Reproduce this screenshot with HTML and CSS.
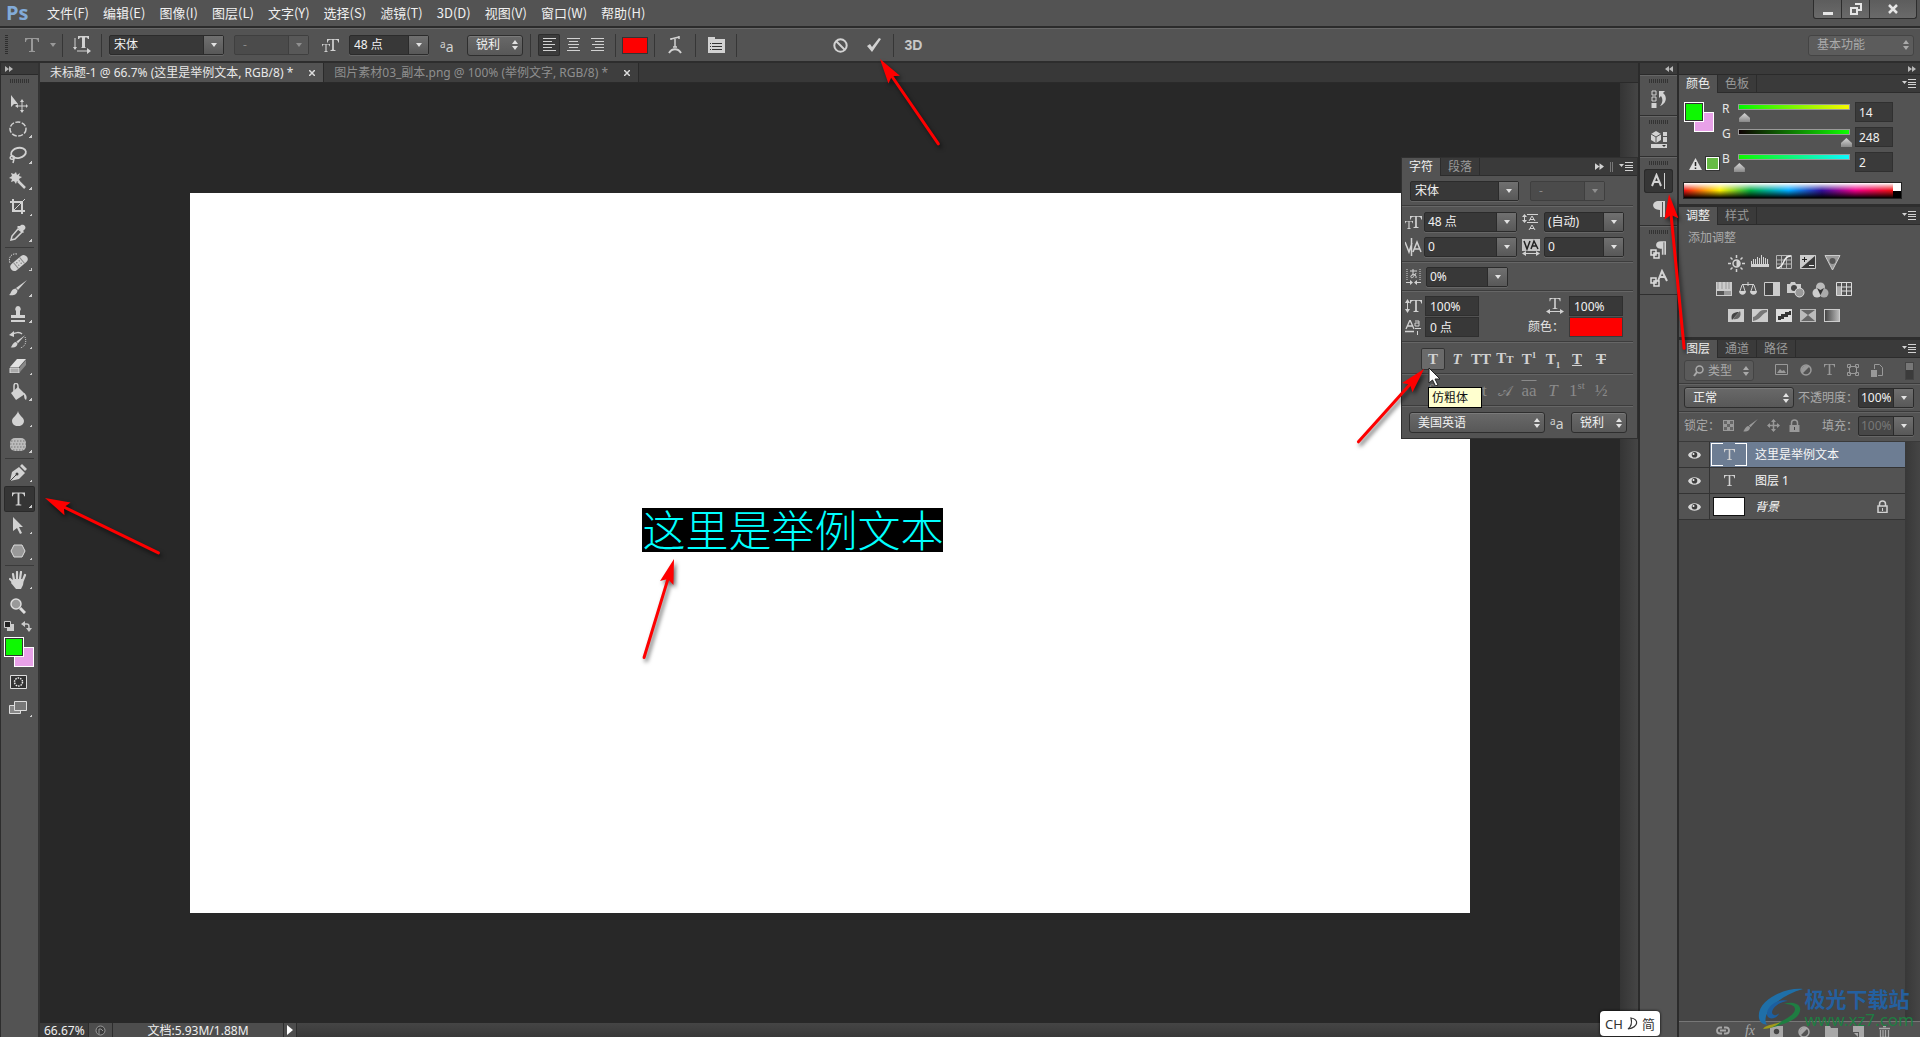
FILE: index.html
```html
<!DOCTYPE html>
<html lang="zh-CN">
<head>
<meta charset="utf-8">
<title>未标题-1 @ 66.7%</title>
<link rel="stylesheet" href="styles.css">
</head>
<body>
<svg class="defs" aria-hidden="true">
  <symbol id="caret" viewBox="0 0 6 4"><path d="M0 0h6L3 4z" fill="currentColor"/></symbol>
  <symbol id="updown" viewBox="0 0 6 10"><path d="M0 4h6L3 0zM0 6h6L3 10z" fill="currentColor"/></symbol>
  <symbol id="flyout" viewBox="0 0 14 9"><path d="M0 2h5L2.500 5z" fill="currentColor"/><path d="M6 .5h8M6 3.500h8M6 5.500h8M6 8.500h8" stroke="currentColor"/></symbol>
  <symbol id="ff" viewBox="0 0 8 6"><path d="M0 0l4 3-4 3zM4 0l4 3-4 3z" fill="currentColor"/></symbol>
  <symbol id="rw" viewBox="0 0 8 6"><path d="M4 0L0 3l4 3zM8 0L4 3l4 3z" fill="currentColor"/></symbol>
  <symbol id="eye" viewBox="0 0 13 10"><path d="M0 5C2 0 11 0 13 5C11 10 2 10 0 5z" fill="#d8d8d8"/><circle cx="6.500" cy="4.800" r="2.800" fill="#3c3c3c"/><circle cx="5.500" cy="4" r="1" fill="#eee"/></symbol>
  <symbol id="big-t" viewBox="0 0 14 14"><path d="M0 0h14v4h-1c0-2-1-3-3-3H8v11c0 1 1 1 2 1v1H4v-1c1 0 2 0 2-1V1H4C2 1 1 2 1 4H0z" fill="currentColor"/></symbol>
  <symbol id="lock" viewBox="0 0 11 13"><path d="M2.500 6V4a3 3 0 0 1 6 0v2" fill="none" stroke="currentColor" stroke-width="1.500"/><path d="M.5 6h10v7H.5z" fill="currentColor"/><path d="M5 8h1v3H5z" fill="#444"/></symbol>
  <symbol id="lock-open" viewBox="0 0 11 13"><path d="M2.500 6V4a3 3 0 0 1 6 0v2M1 6h9v6.500H1z" fill="none" stroke="currentColor" stroke-width="1.500"/><path d="M5 8h1v3H5z" fill="currentColor"/></symbol>
  <symbol id="brush" viewBox="0 0 18 16"><path d="M18 0L9 10 7 8zM6.500 8.500l2 2C8 15 4 16 0 15c2-1 2-6 6.500-6.500z" fill="currentColor"/></symbol>
  <symbol id="pilcrow" viewBox="0 0 12 16"><path d="M12 0v16h-2V1H9v15H7V9C-2 9-2 0 6 0z" fill="currentColor"/></symbol>
  <symbol id="half" viewBox="0 0 12 12"><circle cx="6" cy="6" r="5" fill="none" stroke="currentColor" stroke-width="1.500"/><path d="M9.500 2.500a5 5 0 0 0-7 7z" fill="currentColor"/></symbol>
  <symbol id="arrowhead" viewBox="0 -8 26 16" overflow="visible"><path d="M0 0L25-7 21 0 25 7z" fill="#fe0000"/></symbol>
</svg>

<header class="menubar">
  <strong class="logo">Ps</strong>
  <nav class="menus">
    <a href="#">文件(F)</a><a href="#">编辑(E)</a><a href="#">图像(I)</a><a href="#">图层(L)</a><a href="#">文字(Y)</a><a href="#">选择(S)</a><a href="#">滤镜(T)</a><a href="#">3D(D)</a><a href="#">视图(V)</a><a href="#">窗口(W)</a><a href="#">帮助(H)</a>
  </nav>
  <div class="winbuttons">
    <button class="win-min" aria-label="最小化"><svg width="10" height="14"><path d="M0 10h10v3H0z" fill="#e6e6e6"/></svg></button>
    <button class="win-restore" aria-label="还原"><svg width="12" height="12"><path d="M5 1h6v6H7M1 5h6v6H1z" fill="none" stroke="#e6e6e6" stroke-width="2"/></svg></button>
    <button class="win-close" aria-label="关闭"><svg width="11" height="10"><path d="M1 1l8 8M9 1L1 9" stroke="#e6e6e6" stroke-width="2.500"/></svg></button>
  </div>
</header>

<section class="options">
  <span class="vgrip"></span>
  <button class="flat preset" aria-label="文字工具"><svg class="dim" width="14" height="14"><use href="#big-t"/></svg><svg class="dim" width="6" height="4"><use href="#caret"/></svg></button>
  <i class="sep"></i>
  <button class="flat orient" aria-label="切换文本取向"><svg width="18" height="18" viewBox="0 0 18 18"><path d="M5 0h11v3h-1l-1-1.500h-2V11l1 1H8l1-1V1.500H7L6 3H5z" fill="currentColor"/><path d="M2 2v11M4 15h11" stroke="currentColor"/><path d="M0 11h4l-2 3zM14 12l4 3-4 3z" fill="currentColor"/></svg></button>
  <i class="sep"></i>
  <span class="combo w115"><select aria-label="字体"><option>宋体</option></select><i class="drop"><svg width="6" height="4"><use href="#caret"/></svg></i></span>
  <span class="combo w75 off"><select aria-label="字体样式" disabled><option>-</option></select><i class="drop"><svg width="6" height="4"><use href="#caret"/></svg></i></span>
  <svg class="size-icon" width="17" height="15" viewBox="0 0 17 15"><use href="#big-t" x="5" y="0" width="12" height="14"/><use href="#big-t" x="0" y="6" width="8" height="8"/></svg>
  <span class="combo w80"><select aria-label="字号"><option>48 点</option></select><i class="drop"><svg width="6" height="4"><use href="#caret"/></svg></i></span>
  <span class="aa"><small>a</small>a</span>
  <span class="pick w56"><select aria-label="消除锯齿"><option>锐利</option></select><svg width="6" height="10"><use href="#updown"/></svg></span>
  <i class="sep"></i>
  <div class="aligns">
    <button class="on" aria-label="左对齐"><svg width="13" height="15"><path d="M0 .5h13M0 3.500h9M0 6.500h12M0 9.500h9M0 12.500h13" stroke="currentColor"/></svg></button>
    <button aria-label="居中"><svg width="13" height="15"><path d="M0 .5h13M2 3.500h9M1 6.500h11M2 9.500h9M0 12.500h13" stroke="currentColor"/></svg></button>
    <button aria-label="右对齐"><svg width="13" height="15"><path d="M0 .5h13M4 3.500h9M1 6.500h12M4 9.500h9M0 12.500h13" stroke="currentColor"/></svg></button>
  </div>
  <i class="sep"></i>
  <button class="textcolor" aria-label="文本颜色"></button>
  <i class="sep"></i>
  <button class="flat cell" aria-label="变形"><svg width="14" height="18" viewBox="0 0 14 18"><path d="M3 3l8-2M7 2v9M5 11h4M3 2v2M11 0v3" stroke="currentColor" stroke-width="1.500" fill="none"/><path d="M1 17C4 12 10 12 13 17" stroke="currentColor" stroke-width="2" fill="none"/></svg></button>
  <i class="sep"></i>
  <button class="flat cell" aria-label="字符面板"><svg width="17" height="16" viewBox="0 0 17 16"><path d="M0 0h7v2h10v14H0z" fill="currentColor"/><path d="M2 6.500h1M4 6.500h10M2 9.500h1M4 9.500h10M2 12.500h1M4 12.500h10" stroke="#333"/></svg></button>
  <i class="sep"></i>
  <div class="commit">
    <button class="flat" aria-label="取消"><svg width="15" height="15"><circle cx="7.500" cy="7.500" r="6.200" fill="none" stroke="currentColor" stroke-width="2"/><path d="M3 3l9 9" stroke="currentColor" stroke-width="2"/></svg></button>
    <button class="flat" aria-label="提交"><svg width="16" height="14"><path d="M1 8l3-2 2 3 7-9 2 1-9 13z" fill="currentColor"/></svg></button>
    <i class="sep"></i>
    <button class="flat three-d">3D</button>
  </div>
  <span class="pick workspace-pick"><select aria-label="工作区"><option>基本功能</option></select><svg width="6" height="10"><use href="#updown"/></svg></span>
</section>

<main class="work">
  <aside class="tools">
    <div class="strip"><svg width="8" height="6"><use href="#ff"/></svg></div>
    <span class="grip"></span>
    <button aria-label="移动"><svg width="20" height="20" viewBox="0 0 20 20"><path d="M3 2l7 9H6l-3 3z" fill="currentColor"/><path d="M14 8v10M9 13h10" stroke="currentColor"/><path d="M12 9h4l-2-3zM12 17h4l-2 3zM10 11v4l-3-2zM18 11v4l2-2z" fill="currentColor"/></svg></button>
    <button class="more" aria-label="椭圆选框"><svg width="20" height="20" viewBox="0 0 20 20"><ellipse cx="10" cy="10" rx="8" ry="7" fill="none" stroke="currentColor" stroke-width="1.500" stroke-dasharray="5 1.500"/></svg></button>
    <button class="more" aria-label="套索"><svg width="20" height="20" viewBox="0 0 20 20"><ellipse cx="10.500" cy="8" rx="7.500" ry="5" transform="rotate(-12 10 8)" fill="none" stroke="currentColor" stroke-width="1.800"/><path d="M4 11c-3 1-2 4 1 3s1-3-1-3M6 14l-1 4" fill="none" stroke="currentColor" stroke-width="1.500"/></svg></button>
    <button class="more" aria-label="魔棒"><svg width="20" height="20" viewBox="0 0 20 20"><path d="M8 1l1 3 3-2-1 3 3 1-3 2 1 3-3-1-1 3-2-3-3 1 1-3-3-1 3-2-1-3 3 1z" fill="currentColor"/><path d="M10 10l7 7" stroke="currentColor" stroke-width="2.500"/></svg></button>
    <button class="more" aria-label="裁剪"><svg width="20" height="20" viewBox="0 0 20 20"><path d="M5 2v12h12M2 5h12v12" fill="none" stroke="currentColor" stroke-width="2"/><path d="M5 14L17 2" stroke="currentColor"/></svg></button>
    <button class="more" aria-label="吸管"><svg width="20" height="20" viewBox="0 0 20 20"><path d="M12 3c2-3 7 0 5 3l-2 2 1 1-1 1-6-6 1-1z" fill="currentColor"/><path d="M10 6L4 13l-1 4 4-1 7-7z" fill="none" stroke="currentColor" stroke-width="1.500"/></svg></button>
    <hr>
    <button class="more" aria-label="修复画笔"><svg width="20" height="20" viewBox="0 0 20 20"><g transform="rotate(-40 11 11)"><rect x="1" y="7" width="20" height="8" rx="4" fill="currentColor"/><path d="M7 7v8M15 7v8" stroke="#888"/><path d="M9 9h1v1H9zM12 9h1v1h-1zM9 12h1v1H9zM12 12h1v1h-1z" fill="#555"/></g><path d="M9 2C3 1 0 6 2 11" stroke="currentColor" stroke-dasharray="1.500 1" fill="none"/></svg></button>
    <button class="more" aria-label="画笔"><svg width="18" height="16"><use href="#brush"/></svg></button>
    <button class="more" aria-label="仿制图章"><svg width="16" height="16" viewBox="0 0 16 16"><path d="M8 0a3 3 0 0 1 2 5v4h5v3H1V9h5V5a3 3 0 0 1 2-5zM1 14h14v2H1z" fill="currentColor"/></svg></button>
    <button class="more" aria-label="历史记录画笔"><svg width="18" height="18" viewBox="0 0 18 18"><path d="M2 4c4-3 9-3 11-1" stroke="currentColor" stroke-width="1.500" fill="none"/><path d="M5 0v6L0 4z" fill="currentColor"/><use href="#brush" x="1" y="4" width="16" height="13"/><path d="M16 6c2 5 0 10-5 11" stroke="currentColor" stroke-dasharray="1 1" fill="none"/></svg></button>
    <button class="more" aria-label="橡皮擦"><svg width="18" height="14" viewBox="0 0 18 14"><path d="M8 0h9l-7 8H1z" fill="#e2e2e2"/><path d="M1 9h9v5H1z" fill="#aaa"/><path d="M17 1v5l-6 7V8z" fill="#888"/><path d="M1 9h9v5H1z" fill="none" stroke="#ddd"/></svg></button>
    <button class="more" aria-label="油漆桶"><svg width="18" height="18" viewBox="0 0 18 18"><path d="M5 9V3c0-4 4-3 4 0v5" stroke="currentColor" fill="none" stroke-width="1.500"/><path d="M9 4l7 7-9 6-5-7z" fill="currentColor"/><path d="M15 10c3 2 3 5 2 7-2-1-2-4-2-7z" fill="currentColor"/></svg></button>
    <button class="more" aria-label="模糊"><svg width="12" height="15" viewBox="0 0 12 15"><path d="M6 0c1 5 6 6 6 10 0 7-12 7-12 0 0-4 5-5 6-10z" fill="currentColor"/></svg></button>
    <button class="more" aria-label="海绵"><svg width="18" height="15" viewBox="0 0 18 15"><rect x="1" y="1" width="16" height="13" rx="5" fill="#bbb"/><path d="M2 4h14M1 7h16M2 10h14M4 13h10" stroke="#777" stroke-dasharray="1.500 1.500"/></svg></button>
    <hr>
    <button class="more" aria-label="钢笔"><svg width="18" height="18" viewBox="0 0 18 18"><path d="M1 17L3 8l7-5 6 6-6 6z" fill="currentColor"/><path d="M11 2l2-2 5 5-2 2z" fill="currentColor"/><path d="M1 17l6-6" stroke="#444"/><circle cx="8" cy="10" r="1.500" fill="#444"/></svg></button>
    <button class="more on" aria-label="文字"><svg width="13" height="14"><use href="#big-t"/></svg></button>
    <button class="more" aria-label="路径选择"><svg width="12" height="17" viewBox="0 0 12 17"><path d="M1 0l10 10H7l3 6-2 1-3-6-4 3z" fill="currentColor"/></svg></button>
    <button class="more" aria-label="多边形"><svg width="16" height="14" viewBox="0 0 16 14"><path d="M4 1h8l3 6-3 6H4L1 7z" fill="#999" stroke="#ddd"/></svg></button>
    <hr>
    <button class="more" aria-label="抓手"><svg width="18" height="18" viewBox="0 0 18 18"><path d="M5 9L4 3M8 8V1M11 8l1-7M14 9l2-5M5 12L1 8" stroke="currentColor" stroke-width="2.200" stroke-linecap="round"/><path d="M4 8h11l-1 6-2 4H7l-5-6z" fill="currentColor"/></svg></button>
    <button aria-label="缩放"><svg width="16" height="16" viewBox="0 0 16 16"><circle cx="6" cy="6" r="5" fill="#999" stroke="#ddd" stroke-width="1.500"/><path d="M10 10l5 5" stroke="#ddd" stroke-width="3"/></svg></button>
    <div class="swapline">
      <svg width="10" height="10"><path d="M3 3h7v7H3z" fill="#ccc"/><path d="M.5.5h6v6h-6z" fill="#222" stroke="#ccc"/></svg>
      <svg width="11" height="11"><path d="M3 3h3c2 0 2 1 2 5" fill="none" stroke="#ccc" stroke-width="1.500"/><path d="M0 3l4-3v6zM5 7h6l-3 4z" fill="#ccc"/></svg>
    </div>
    <div class="swatches"><button class="fg" aria-label="前景色"></button><button class="bg" aria-label="背景色"></button></div>
    <button aria-label="快速蒙版"><svg width="17" height="14"><path d="M.5.5h16v13H.5z" fill="#333" stroke="#ddd"/><circle cx="8.500" cy="7" r="4" fill="none" stroke="#eee" stroke-width="1.500" stroke-dasharray="1.500 1"/></svg></button>
    <button class="more" aria-label="屏幕模式"><svg width="18" height="14"><path d="M.5 4.500h11v8H.5z" fill="#888" stroke="#ddd"/><path d="M5.500.5h12v9h-12z" fill="#777" stroke="#ddd"/></svg></button>
  </aside>

  <section class="doc">
    <div class="tabs">
      <div class="tab active"><span>未标题-1 @ 66.7% (这里是举例文本, RGB/8) *</span><button aria-label="关闭"><svg width="6" height="6"><path d="M0 0l6 6M6 0L0 6" stroke="#ddd" stroke-width="1.500"/></svg></button></div>
      <div class="tab"><span>图片素材03_副本.png @ 100% (举例文字, RGB/8) *</span><button aria-label="关闭"><svg width="6" height="6"><path d="M0 0l6 6M6 0L0 6" stroke="#ddd" stroke-width="1.500"/></svg></button></div>
    </div>
    <div class="stage">
      <div class="pasteboard"><div class="canvas"><p class="sample">这里是举例文本</p></div></div>
      <div class="vscroll"></div>
    </div>
    <footer class="status">
      <span class="zoomlevel">66.67%</span>
      <span class="proof"><svg width="11" height="11"><circle cx="5.500" cy="5.500" r="4.500" fill="#3c3c3c" stroke="#999"/><path d="M4 9V4h2l2 2" stroke="#999" fill="none"/></svg></span>
      <span class="docsize">文档:5.93M/1.88M</span>
      <button aria-label="状态菜单"><svg width="6" height="10"><path d="M0 0l6 5-6 5z" fill="#fff"/></svg></button>
    </footer>

    <section class="charpanel">
      <div class="ptabs"><button class="active">字符</button><button>段落</button><span class="ends"><svg width="9" height="7"><use href="#ff"/></svg><i class="bars"></i><svg width="14" height="9"><use href="#flyout"/></svg></span></div>
      <div class="crow fonts">
        <span class="combo w109"><select aria-label="字体"><option>宋体</option></select><i class="drop"><svg width="6" height="4"><use href="#caret"/></svg></i></span>
        <span class="combo w75 off"><select aria-label="样式" disabled><option>-</option></select><i class="drop"><svg width="6" height="4"><use href="#caret"/></svg></i></span>
      </div>
      <div class="crow metrics">
        <svg width="17" height="15" viewBox="0 0 17 15"><use href="#big-t" x="5" y="0" width="12" height="14"/><use href="#big-t" x="0" y="6" width="8" height="8"/></svg>
        <span class="combo"><select aria-label="字号"><option>48 点</option></select><i class="drop"><svg width="6" height="4"><use href="#caret"/></svg></i></span>
        <svg width="17" height="16" viewBox="0 0 17 16"><path d="M2.500 1v7M5 .5h11M5 8.500h11" stroke="currentColor"/><path d="M0 3h5L2.500 0zM0 6h5L2.500 9z" fill="currentColor"/><path d="M7 7l3-5 3 5M7 16l3-5 3 5M8 5.500h4M8 14.500h4" fill="none" stroke="currentColor"/></svg>
        <span class="combo"><select aria-label="行距"><option>(自动)</option></select><i class="drop"><svg width="6" height="4"><use href="#caret"/></svg></i></span>
        <svg width="18" height="18" viewBox="0 0 18 18"><path d="M0 4l4 10 3-9M8 14l4-10 4 10M9 11h6M6.500 0v18" fill="none" stroke="currentColor" stroke-width="1.500"/></svg>
        <span class="combo"><select aria-label="字距微调"><option>0</option></select><i class="drop"><svg width="6" height="4"><use href="#caret"/></svg></i></span>
        <svg width="18" height="17" viewBox="0 0 18 17"><path d="M0 0h18v12H0z" fill="#c4c4c4"/><path d="M2 2l3 8 3-8M9 10l3-8 4 8M10 7h5" fill="none" stroke="#222" stroke-width="1.500"/><path d="M3 14.500h12" stroke="currentColor"/><path d="M0 14.500l4-2.500v5zM18 14.500L14 12v5z" fill="currentColor"/></svg>
        <span class="combo"><select aria-label="字距"><option>0</option></select><i class="drop"><svg width="6" height="4"><use href="#caret"/></svg></i></span>
      </div>
      <div class="crow tsume">
        <svg width="15" height="16" viewBox="0 0 15 16"><path d="M1 0v11M14 0v11" stroke="currentColor" stroke-dasharray="1 1"/><path d="M4 2h7M7 0v7M10 4c-2 5-6 6-5 3s6-2 5 2" stroke="currentColor" fill="none"/><path d="M0 13.500h6M9 13.500h6" stroke="currentColor"/><path d="M4 11l3 2.500L4 16zM11 11l-3 2.500 3 2.500z" fill="currentColor"/></svg>
        <span class="combo w82"><select aria-label="比例间距"><option>0%</option></select><i class="drop"><svg width="6" height="4"><use href="#caret"/></svg></i></span>
      </div>
      <div class="crow scales">
        <svg width="17" height="15" viewBox="0 0 17 15"><use href="#big-t" x="5" y="0" width="12" height="14"/><path d="M2.500 2v10" stroke="currentColor"/><path d="M0 4h5L2.500 0zM0 10h5L2.500 14z" fill="currentColor"/></svg>
        <input aria-label="垂直缩放" value="100%">
        <svg width="18" height="16" viewBox="0 0 18 16"><use href="#big-t" x="3" y="0" width="12" height="11"/><path d="M2 13.500h14" stroke="currentColor"/><path d="M0 13.500l4-2.500v5zM18 13.500L14 11v5z" fill="currentColor"/></svg>
        <input aria-label="水平缩放" value="100%">
        <svg width="16" height="15" viewBox="0 0 16 15"><path d="M1 9l4-9 4 9M2 6h6M0 11.500h9" stroke="currentColor" fill="none" stroke-width="1.300"/><path d="M10 1h4v5h-4V3h4M10 8.500h6M12.500 15v-4" stroke="currentColor" fill="none"/></svg>
        <input aria-label="基线偏移" value="0 点">
        <span class="clabel">颜色：</span>
        <button class="redswatch" aria-label="颜色"></button>
      </div>
      <div class="crow styles">
        <button class="on"><b>T</b></button><button><em>T</em></button><button>TT</button><button>T<small>T</small></button><button>T<sup>1</sup></button><button>T<sub>1</sub></button><button><u>T</u></button><button><s>T</s></button>
      </div>
      <div class="crow styles otf">
        <button>fi</button><button><em>o</em></button><button>st</button><button class="swash">𝒜</button><button class="over">aa</button><button><em>T</em></button><button>1<sup>st</sup></button><button>½</button>
      </div>
      <div class="crow lang">
        <span class="pick w136"><select aria-label="语言"><option>美国英语</option></select><svg width="6" height="10"><use href="#updown"/></svg></span>
        <span class="aa"><small>a</small>a</span>
        <span class="pick w56"><select aria-label="消除锯齿方法"><option>锐利</option></select><svg width="6" height="10"><use href="#updown"/></svg></span>
      </div>
      <div class="tip" role="tooltip">仿粗体</div>
      <svg class="cursor" width="13" height="20" viewBox="0 0 13 20"><path d="M1 1v15l3.500-3 3 6 2.500-1-3-6h5z" fill="#fff" stroke="#222"/></svg>
    </section>
  </section>

  <aside class="dock">
    <div class="strip right"><svg width="8" height="6"><use href="#rw"/></svg></div>
    <div class="dgroup"><span class="grip"></span><button aria-label="历史记录"><svg width="16" height="18" viewBox="0 0 16 18"><path d="M1 1h4v4H1zM1 7h4v4H1z" fill="none" stroke="currentColor"/><path d="M.5 13h5v5h-5z" fill="currentColor"/><path d="M8 1h6l-2 2c5 4 3 11-3 13 3-4 3-7 1-10L8 8z" fill="currentColor"/></svg></button></div>
    <div class="dgroup"><span class="grip"></span><button aria-label="属性"><svg width="16" height="18" viewBox="0 0 16 18"><path d="M5 0l5 3v6l-5 3-5-3V3z" fill="currentColor"/><path d="M0 3l5 3 5-3M5 6v6" stroke="#555" fill="none"/><path d="M12 1h4v4h-4zM12 6h4v5h-4zM0 13h16v4H0z" fill="currentColor"/><path d="M11 14h4l-2 2z" fill="#333"/></svg></button></div>
    <div class="dgroup two"><span class="grip"></span><button class="on" aria-label="字符"><svg width="15" height="16" viewBox="0 0 15 16"><path d="M1 13L5.500 2 10 13M3 9h6" stroke="currentColor" stroke-width="2" fill="none"/><path d="M13.500 0v16" stroke="currentColor"/></svg></button><button aria-label="段落"><svg width="12" height="16"><use href="#pilcrow"/></svg></button></div>
    <div class="dgroup two"><span class="grip"></span><button aria-label="段落样式"><svg width="17" height="18" viewBox="0 0 17 18"><use href="#pilcrow" x="6" y="0" width="10" height="14"/><path d="M1 9h5v5H1zM4 12h5v5H4z" fill="#535353" stroke="#ddd" stroke-width="1.500"/></svg></button><button aria-label="字符样式"><svg width="18" height="18" viewBox="0 0 18 18"><path d="M8 12l4-10 5 10M9 8h6" stroke="currentColor" stroke-width="2" fill="none"/><path d="M1 9h5v5H1zM4 12h5v5H4z" fill="#535353" stroke="#ddd" stroke-width="1.500"/></svg></button></div>
  </aside>

  <aside class="panels">
    <div class="strip right"><svg width="8" height="6"><use href="#ff"/></svg></div>

    <section class="panel">
      <div class="ptabs"><button class="active">颜色</button><button>色板</button><span class="ends"><svg width="14" height="9"><use href="#flyout"/></svg></span></div>
      <div class="colorbody">
        <div class="leftcol">
          <div class="swatches"><button class="fg" aria-label="前景色"></button><button class="bg" aria-label="背景色"></button></div>
          <div class="gamut"><svg width="13" height="12"><path d="M6.500 0L13 12H0z" fill="#ddd"/><path d="M6.500 4v4M6.500 9.500v1.500" stroke="#222" stroke-width="1.500"/></svg><i></i></div>
        </div>
        <div class="rgb">
          <label for="r">R</label><input id="r" class="range red" type="range" max="255" value="14"><input class="num" aria-label="R 值" value="14">
          <label for="g">G</label><input id="g" class="range green" type="range" max="255" value="248"><input class="num" aria-label="G 值" value="248">
          <label for="b">B</label><input id="b" class="range blue" type="range" max="255" value="2"><input class="num" aria-label="B 值" value="2">
        </div>
      </div>
      <div class="spectrum"><i class="ramp"></i><i class="bw"></i></div>
    </section>

    <section class="panel">
      <div class="ptabs"><button class="active">调整</button><button>样式</button><span class="ends"><svg width="14" height="9"><use href="#flyout"/></svg></span></div>
      <div class="adjust">
        <p>添加调整</p>
        <div class="irow">
          <button aria-label="亮度"><svg width="17" height="17" viewBox="0 0 17 17"><circle cx="8.500" cy="8.500" r="3.500" fill="none" stroke="currentColor" stroke-width="1.500"/><path d="M8.500 5v7a3.500 3.500 0 0 0 0-7z" fill="currentColor"/><path d="M8.500 0v3M8.500 14v3M0 8.500h3M14 8.500h3M2.500 2.500l2 2M12.500 12.500l2 2M14.500 2.500l-2 2M4.500 12.500l-2 2" stroke="currentColor" stroke-width="1.500"/></svg></button>
          <button aria-label="色阶"><svg width="18" height="12"><path d="M0 12V6h1v3h1V4h1v5h1V4h1v5h1V2h1v7h1V3h1v6h1V0h1v9h1V2h1v7h1V3h1v6h1V4h1v5h1v3z" fill="currentColor"/></svg></button>
          <button aria-label="曲线"><svg width="16" height="14"><path d="M.5.5h15v13H.5zM.5 5h15M.5 9h15M5.500 0v14M10.500 0v14" fill="none" stroke="#b5b5b5"/><path d="M1 13c8 0 5-12 14-12" fill="none" stroke="#eee" stroke-width="1.500"/></svg></button>
          <button aria-label="曝光度"><svg width="16" height="14"><path d="M.5.5h15v13H.5z" fill="#3a3a3a" stroke="#ccc"/><path d="M0 0h16L0 14z" fill="#ccc"/><path d="M2 4.500h5M4.500 2v5" stroke="#222"/><path d="M9 10.500h5" stroke="#eee"/></svg></button>
          <button aria-label="自然饱和度"><svg width="17" height="16"><path d="M1 .5h15L8.500 15z" fill="#999" stroke="#ccc"/><circle cx="8.500" cy="6" r="3" fill="#555"/></svg></button>
        </div>
        <div class="irow">
          <button aria-label="色相"><svg width="16" height="14"><path d="M0 0h16v14H0z" fill="#ccc"/><path d="M2 0v7M6 0v7M10 0v7M13 0v7" stroke="#999"/><path d="M1 9h7v4H1z" fill="#555"/><path d="M8 9h7v4H8z" fill="#999"/></svg></button>
          <button aria-label="色彩平衡"><svg width="18" height="14"><path d="M3 2.500h12M9 0v4M3 3L1 9M4 3l2 6M14 3l-2 6M15 3l2 6" stroke="currentColor" fill="none"/><path d="M0 9h7c0 5-7 5-7 0zM11 9h7c0 5-7 5-7 0z" fill="currentColor"/></svg></button>
          <button aria-label="黑白"><svg width="16" height="14"><path d="M.5.500h15v13H.5z" fill="#444" stroke="#ccc"/><path d="M9 0h7v14H9z" fill="#ccc"/></svg></button>
          <button aria-label="照片滤镜"><svg width="18" height="16"><path d="M0 2h3l1-2h4l1 2h5v9H0z" fill="#ccc"/><circle cx="7" cy="6" r="3" fill="#444"/><circle cx="12.500" cy="10.500" r="4.500" fill="#999" stroke="#ddd"/></svg></button>
          <button aria-label="通道混和器"><svg width="17" height="16"><circle cx="8.500" cy="5" r="4.500" fill="#bbb"/><circle cx="5" cy="11" r="4.500" fill="#ccc"/><circle cx="12" cy="11" r="4.500" fill="#aaa"/><path d="M5 6l3.500 2L12 6l-2 4-1.500 3L7 10z" fill="#333"/></svg></button>
          <button aria-label="颜色查找"><svg width="16" height="14"><path d="M0 0h16v14H0z" fill="#555"/><path d="M.5.500h15v13H.5zM.5 5h15M.5 9h15M5.500 0v14M10.500 0v14" fill="none" stroke="#ddd"/><path d="M1 5h4v8H1z" fill="#aaa"/></svg></button>
        </div>
        <div class="irow">
          <button aria-label="反相"><svg width="16" height="13"><path d="M0 0h16v13H0z" fill="#ccc"/><path d="M4 11c-2-6 2-8 7-8z" fill="#444"/><path d="M12 2c2 6-2 9-7 8z" fill="#666"/></svg></button>
          <button aria-label="色调分离"><svg width="16" height="13"><path d="M0 0h16v13H0z" fill="#ccc"/><path d="M1 8C6 7 6 1 12 1h3v2C10 4 9 11 1 12z" fill="#777"/></svg></button>
          <button aria-label="阈值"><svg width="16" height="13"><path d="M0 0h16v13H0z" fill="#ddd"/><path d="M2 11V7h3V5h4V3h4V2h2v4h-3v2H8v2H5v1z" fill="#333"/></svg></button>
          <button aria-label="可选颜色"><svg width="16" height="13"><path d="M0 0h16v13H0z" fill="#bbb"/><path d="M1 1l7 5 7-5M1 12l7-6 7 6" fill="#666"/></svg></button>
          <button aria-label="渐变映射"><span class="gradmap"></span></button>
        </div>
      </div>
    </section>

    <section class="panel layers">
      <div class="ptabs"><button class="active">图层</button><button>通道</button><button>路径</button><span class="ends"><svg width="14" height="9"><use href="#flyout"/></svg></span></div>
      <div class="lrow filter">
        <span class="pick kind"><svg width="11" height="12"><circle cx="6.500" cy="4.500" r="3.500" fill="none" stroke="currentColor" stroke-width="1.500"/><path d="M4 7l-3 4" stroke="currentColor" stroke-width="2"/></svg><select aria-label="类型"><option>类型</option></select><svg width="6" height="10"><use href="#updown"/></svg></span>
        <div class="filters">
          <svg width="13" height="11"><path d="M.5.500h12v10H.5z" fill="none" stroke="currentColor"/><path d="M2 9l3-4 2 2 2-1 2 3z" fill="currentColor"/></svg>
          <svg width="12" height="12"><use href="#half"/></svg>
          <svg width="11" height="11"><use href="#big-t"/></svg>
          <svg width="12" height="12"><path d="M2.500 2.500h7v7h-7zM.5.500h3v3h-3zM8.500.500h3v3h-3zM.5 8.500h3v3h-3zM8.500 8.500h3v3h-3z" fill="none" stroke="currentColor"/></svg>
          <svg width="12" height="13"><path d="M3.500 5V.5h5l3 3v8H7" fill="none" stroke="currentColor"/><path d="M0 6h6v7H0z" fill="currentColor"/></svg>
        </div>
        <i class="toggle"></i>
      </div>
      <div class="lrow">
        <span class="pick blend"><select aria-label="混合模式"><option>正常</option></select><svg width="6" height="10"><use href="#updown"/></svg></span>
        <label for="opacity">不透明度：</label>
        <span class="combo w56"><input id="opacity" value="100%"><i class="drop"><svg width="6" height="4"><use href="#caret"/></svg></i></span>
      </div>
      <div class="lrow lockrow">
        <span class="clabel">锁定：</span>
        <div class="locks">
          <svg width="11" height="11"><path d="M0 0h11v11H0z" fill="#999"/><path d="M1 1h3v3H1zM7 1h3v3H7zM4 4h3v3H4zM1 7h3v3H1zM7 7h3v3H7z" fill="#666"/></svg>
          <svg width="15" height="13"><use href="#brush"/></svg>
          <svg width="13" height="13"><path d="M6.500 1v11M1 6.500h11" stroke="currentColor" stroke-width="1.500"/><path d="M4 3h5L6.500 0zM4 10h5l-2.500 3zM3 4v5L0 6.500zM10 4v5l3-2.500z" fill="currentColor"/></svg>
          <svg width="11" height="13"><use href="#lock"/></svg>
        </div>
        <label for="fill">填充：</label>
        <span class="combo w56 dimtext"><input id="fill" value="100%"><i class="drop"><svg width="6" height="4"><use href="#caret"/></svg></i></span>
      </div>
      <div class="layerlist">
        <ul>
          <li class="sel"><button class="vis" aria-label="可见"><svg width="13" height="10"><use href="#eye"/></svg></button><span class="thumb framed"><i></i><svg width="11" height="11"><use href="#big-t"/></svg></span><span class="name">这里是举例文本</span></li>
          <li><button class="vis" aria-label="可见"><svg width="13" height="10"><use href="#eye"/></svg></button><span class="thumb"><svg width="11" height="11"><use href="#big-t"/></svg></span><span class="name">图层 1</span></li>
          <li><button class="vis" aria-label="可见"><svg width="13" height="10"><use href="#eye"/></svg></button><span class="thumb"><i class="white"></i></span><span class="name"><em>背景</em></span><svg class="locked" width="11" height="13"><use href="#lock-open"/></svg></li>
        </ul>
        <div class="lscroll"></div>
      </div>
      <footer class="lfoot">
        <svg width="14" height="9"><path d="M6 1.500H4a3 3 0 0 0 0 6h2M8 1.500h2a3 3 0 0 1 0 6H8M4 4.500h6" stroke="currentColor" stroke-width="1.800" fill="none"/></svg>
        <em class="fx">fx</em>
        <svg width="13" height="11"><path d="M0 0h13v11H0z" fill="currentColor"/><circle cx="6.500" cy="5.500" r="2.700" fill="#444"/></svg>
        <svg width="12" height="12"><use href="#half"/></svg>
        <svg width="13" height="11"><path d="M0 0h5l1 2h7v9H0z" fill="currentColor"/></svg>
        <svg width="11" height="11"><path d="M0 0h11v11H6V6H0z" fill="currentColor"/><path d="M1 7h4v4z" fill="currentColor"/></svg>
        <svg width="11" height="12"><path d="M0 2.500h11M4 .5h3M1.500 4v8M4 4v8M6.500 4v8M9.500 4v8M1 11.500h9" stroke="currentColor" stroke-width="1.300"/></svg>
      </footer>
    </section>
  </aside>
</main>

<div class="ime">CH <svg width="11" height="13" viewBox="0 0 11 13"><path d="M4 1c8 1 8 9-3 11 4-3 4-7 3-11z" fill="none" stroke="#333" stroke-width="1.200"/></svg> 简</div>

<div class="watermark">
  <svg width="46" height="44" viewBox="0 0 46 44"><path d="M45 2C26 0-2 14 1 31c1 5 4 6 8 7C2 27 20 9 45 2z" fill="#1f6fa8"/><path d="M9 27c0-9 13-16 21-13-6 0-15 5-16 11 0 4 5 4 7 1-1 6-12 8-12 1z" fill="#1d5fa0"/><path d="M26 17c8-3 18 0 16 7C40 34 22 39 5 42c16-6 32-13 32-20 0-4-6-5-11-5z" fill="#1f7d42"/><path d="M5 42c3-4 10-4 18-7-5 4-11 7-18 7z" fill="#a29a1c"/></svg>
  <div><b>极光下载站</b><span>www.xz7.com</span></div>
</div>

<svg class="pointers" aria-hidden="true">
  <g transform="translate(880 59) rotate(55.500)"><path d="M20 0H103"/><use href="#arrowhead" y="-8" width="26" height="16"/></g>
  <g transform="translate(1424 369) rotate(132)"><path d="M20 0H98"/><use href="#arrowhead" y="-8" width="26" height="16"/></g>
  <g transform="translate(1669 194) rotate(84.400)"><path d="M20 0H155"/><use href="#arrowhead" y="-8" width="26" height="16"/></g>
  <g transform="translate(45 498) rotate(25.800)"><path d="M20 0H126"/><use href="#arrowhead" y="-8" width="26" height="16"/></g>
  <g transform="translate(674 559) rotate(106.900)"><path d="M20 0H103"/><use href="#arrowhead" y="-8" width="26" height="16"/></g>
</svg>
</body>
</html>
```

FILE: styles.css
```css
* { box-sizing: border-box; }
body {
  margin: 0; height: 100vh; display: flex; flex-direction: column; overflow: hidden;
  background: #535353; color: #e6e6e6;
  font: 12px/16px "Noto Sans", "Noto Sans CJK SC", sans-serif;
}
button, select, input { font: inherit; color: inherit; margin: 0; padding: 0; border: 0; border-radius: 0; background: none; min-width: 0; }
select { appearance: none; }
select:disabled { opacity: 1; }
input { outline: 0; }
svg { display: block; flex: none; color: #d2d2d2; }
.dim { color: #999; }
.defs { position: absolute; width: 0; height: 0; }
i { font-style: normal; }

/* menu bar */
.menubar { flex: none; height: 28px; display: flex; align-items: center; border-bottom: 2px solid #2b2b2b; }
.logo { width: 40px; padding-left: 6px; font: bold 20px/26px "Open Sans", sans-serif; color: #82abd9; }
.menus { display: flex; font-family: "Noto Sans CJK SC", sans-serif; font-size: 13px; }
.menus a { color: #f0f0f0; text-decoration: none; padding: 0 7px; }
.winbuttons { margin-left: auto; margin-right: 3px; align-self: flex-start; display: flex; height: 19px; border: 1px solid #2d2d2d; border-top: 0; border-radius: 0 0 3px 3px; background: linear-gradient(#5d5d5d, #6a6a6a); }
.winbuttons button { width: 28px; display: grid; place-items: center; border-right: 1px solid #2d2d2d; }
.winbuttons .win-close { width: 46px; border-right: 0; }

/* options bar */
.options { flex: none; height: 35px; display: flex; align-items: center; gap: 7px; padding: 0 6px 0 5px; border-top: 1px solid #686868; border-bottom: 2px solid #2d2d2d; }
.vgrip { width: 3px; height: 20px; background: repeating-linear-gradient(#2e2e2e 0 1px, #535353 1px 2px); }
.sep { flex: none; width: 1px; height: 23px; background: #363636; }
.flat { flex: none; display: flex; align-items: center; justify-content: center; }
.preset { width: 40px; gap: 11px; padding-left: 10px; }
.orient { width: 24px; }
.combo { flex: none; display: flex; height: 20px; background: #383838; border: 1px solid #2b2b2b; border-radius: 2px; box-shadow: 0 1px #666; }
.combo select, .combo input { flex: 1; width: 0; padding: 0 4px; height: 18px; line-height: 18px; color: #f2f2f2; }
.drop { flex: none; width: 20px; display: grid; place-items: center; border-left: 1px solid #2b2b2b; background: linear-gradient(#707070, #585858); }
.drop svg, .pick svg { color: #e2e2e2; }
.off { background: #4b4b4b; border-color: #3f3f3f; box-shadow: none; }
.off select { color: #888; padding-left: 8px; }
.off .drop { background: #585858; border-color: #3f3f3f; }
.off .drop svg { color: #8f8f8f; }
.w56 { width: 56px; }
.w75 { width: 75px; }
.w80 { width: 80px; }
.w82 { width: 82px; }
.w109 { width: 109px; }
.w115 { width: 115px; }
.w136 { width: 136px; }
.options .w75 { margin: 0 6px 0 3px; }
.options .w80 { margin-left: 3px; }
.options .aa { margin: 0 4px; }
.pick { flex: none; display: flex; align-items: center; height: 21px; padding: 0 4px 0 8px; background: linear-gradient(#696969, #585858); border: 1px solid #2e2e2e; border-radius: 3px; box-shadow: inset 0 1px #7a7a7a; }
.pick select { flex: 1; width: 0; color: #f2f2f2; }
.aa { flex: none; width: 16px; font: 14px/16px "Noto Sans"; color: #d2d2d2; white-space: nowrap; }
.aa small { font-size: 10px; vertical-align: 4px; }
.aligns { display: flex; gap: 2px; }
.aligns button { width: 22px; height: 22px; display: grid; place-items: center; border-radius: 2px; }
.aligns .on { background: #3b3b3b; box-shadow: inset 0 0 0 1px #2d2d2d; }
.textcolor { width: 26px; height: 17px; margin: 0 -1px; background: #fe0000; border: 1px solid #333; }
.cell { width: 26px; }
.commit { display: flex; align-items: center; margin-left: 80px; }
.commit .flat { width: 33px; }
.commit .sep { margin: 0 3px; }
.commit .three-d { font: bold 14px/18px "Liberation Sans", sans-serif; color: #c8c8c8; }
.workspace-pick { margin-left: auto; width: 106px; border-color: #444; box-shadow: none; background: #5c5c5c; }
.workspace-pick select, .workspace-pick svg { color: #aaa; }

/* work area columns */
.work { flex: 1; min-height: 0; display: flex; }
.strip { flex: none; height: 12px; background: #3a3a3a; border-bottom: 1px solid #2a2a2a; display: flex; align-items: center; padding: 0 4px; }
.strip.right { justify-content: flex-end; }
.strip svg { color: #b8b8b8; }
.grip { display: block; flex: none; width: 19px; height: 4px; margin: 3px auto 4px; background: repeating-linear-gradient(90deg, #333 0 1px, #535353 1px 2px); }

.tools { flex: none; width: 40px; display: flex; flex-direction: column; border-left: 1px solid #2d2d2d; border-right: 2px solid #333; }
.tools .grip { margin: 4px auto 7px; }
.tools > button { flex: none; width: 31px; height: 26px; margin-left: 3px; display: grid; place-items: center; border-radius: 2px; padding-right: 3px; }
.tools .more { background: linear-gradient(135deg, transparent 50%, #ccc 50%) 25px 19px / 3px 3px no-repeat; }
.tools .on { background-color: #353535; box-shadow: inset 0 0 0 1px #2a2a2a; }
.tools hr { width: 29px; height: 1px; flex: none; margin: 1px 0 1px 4px; border: 0; background: #3a3a3a; }
.swapline { display: flex; justify-content: space-between; padding: 2px 6px 5px 3px; }
.swatches { flex: none; width: 30px; height: 30px; display: grid; grid-template: repeat(3, 10px) / repeat(3, 10px); }
.tools .swatches { margin: 0 0 2px 3px; }
.swatches .fg { grid-area: 1 / 1 / 3 / 3; background: #0ef802; border: 1px solid #fff; outline: 1px solid #333; outline-offset: -2px; z-index: 1; }
.swatches .bg { grid-area: 2 / 2 / 4 / 4; background: #e8a1e8; border: 1px solid #fff; }

/* document */
.doc { flex: 1; min-width: 0; position: relative; display: flex; flex-direction: column; background: #282828; border-right: 2px solid #2b2b2b; }
.tabs { flex: none; height: 20px; display: flex; background: #383838; border-bottom: 1px solid #2a2a2a; }
.tab { display: flex; align-items: center; gap: 16px; padding: 0 8px 0 10px; background: #3e3e3e; color: #8f8f8f; border-right: 1px solid #2a2a2a; white-space: nowrap; }
.tab.active { background: #535353; color: #e8e8e8; }
.stage { flex: 1; display: flex; min-height: 0; }
.pasteboard { flex: 1; display: flex; align-items: center; justify-content: center; min-width: 0; }
.canvas { width: 81%; aspect-ratio: 16 / 9; display: flex; justify-content: center; background: #fff; }
.sample { margin: 0 74px 46px 0; padding-bottom: 4px; align-self: center; background: #000; color: #0ff; font: 300 43px/40px "Noto Sans CJK SC", sans-serif; white-space: nowrap; }
.vscroll { flex: none; width: 18px; background: linear-gradient(90deg, #353535, #454545); }
.status { flex: none; height: 14px; overflow: hidden; display: flex; background: linear-gradient(#454545, #383838); color: #f0f0f0; }
.status > * { flex: none; border-right: 1px solid #2d2d2d; background: #4d4d4d; }
.zoomlevel { width: 49px; padding-left: 4px; background: #3a3a3a; }
.proof { width: 24px; padding: 2px 6px; }
.docsize { width: 171px; text-align: center; }
.status button { width: 13px; display: grid; place-items: center; }

/* panel tabs */
.ptabs { display: flex; height: 18px; background: #3a3a3a; border-bottom: 1px solid #2c2c2c; }
.ptabs button { width: 39px; color: #999; border-right: 1px solid #2c2c2c; }
.ptabs .active { color: #f0f0f0; background: #535353; height: 18px; }
.ends { margin-left: auto; display: flex; align-items: center; gap: 6px; padding-right: 4px; }
.bars { width: 3px; height: 10px; border: solid #777; border-width: 0 1px; }

/* floating character panel */
.charpanel { position: absolute; top: 94px; right: 0; width: 237px; background: #535353; border: 1px solid #303030; }
.crow { display: flex; align-items: center; padding: 5px 4px; border-top: 1px solid #666; box-shadow: 0 -1px #3c3c3c; margin-right: 4px; }
.crow input { height: 20px; width: 54px; padding: 0 4px; background: #383838; border: 1px solid #2f2f2f; color: #f2f2f2; }
.fonts { gap: 11px; padding-left: 8px; border: 0; box-shadow: none; margin-right: 0; height: 30px; }
.metrics { display: grid; grid-template-columns: 19px 93px 27px 80px; row-gap: 5px; height: 56px; padding-left: 3px; }
.metrics .combo select { padding-left: 3px; }
.metrics > :nth-child(4n+3) { justify-self: center; }
.tsume { gap: 5px; height: 29px; }
.tsume .combo select { padding-left: 3px; }
.scales { display: grid; grid-template-columns: 20px 54px 1fr 54px; row-gap: 1px; height: 51px; padding: 4px 10px 6px 3px; }
.scales > :nth-child(4n+3) { justify-self: end; margin-right: 5px; }
.clabel { white-space: nowrap; }
.scales .redswatch { height: 20px; background: #fe0000; border: 1px solid #3a3a3a; }
.styles { height: 32px; padding: 0 19px; font: 15px/20px "Liberation Serif", serif; }
.styles button { flex: none; width: 24px; height: 22px; white-space: nowrap; font-weight: bold; color: #d2d2d2; }
.styles small { font-size: 11px; }
.styles sup, .styles sub { font-size: 9px; line-height: 0; }
.styles .on { background: #6a6a6a; box-shadow: inset 0 0 0 1px #333; border-radius: 2px; }
.otf button { color: #8a8a8a; font-weight: normal; font-size: 17px; }
.otf sup { font-size: 11px; }
.otf .swash { font-size: 15px; }
.otf .over { text-decoration: overline; }
.lang { height: 32px; padding: 0 7px; gap: 5px; }
.tip { position: absolute; left: 26px; top: 229px; width: 54px; height: 21px; background: #ffffcf; border: 1px solid #000; color: #111; line-height: 18px; padding-left: 3px; font-family: "Noto Sans CJK SC", sans-serif; }
.cursor { position: absolute; left: 26px; top: 209px; }

/* icon dock */
.dock { flex: none; width: 39px; display: flex; flex-direction: column; border-right: 2px solid #2b2b2b; }
.dgroup { flex: none; height: 41px; border-top: 1px solid #666; border-bottom: 1px solid #2f2f2f; }
.dgroup button { display: grid; place-items: center; width: 29px; height: 24px; margin: 0 auto; border-radius: 3px; }
.dgroup .on { background: #363636; box-shadow: inset 0 0 0 1px #2a2a2a; }
.two { height: 69px; }
.two button + button { margin-top: 4px; }

/* right panels */
.panels { flex: none; width: 241px; display: flex; flex-direction: column; }
.panel { flex: none; border-bottom: 3px solid #2e2e2e; }
.colorbody { display: flex; height: 88px; padding: 9px 5px 0; }
.leftcol { width: 38px; display: flex; flex-direction: column; gap: 25px; }
.gamut { display: flex; align-items: center; gap: 4px; padding-left: 5px; }
.gamut i { width: 13px; height: 13px; background: #66bb44; border: 1px solid #fff; outline: 1px solid #333; }
.rgb { display: grid; grid-template-columns: 11px 122px 38px; grid-auto-rows: 20px; row-gap: 5px; }
.rgb label { line-height: 14px; }
.rgb .num { height: 20px; padding: 0 3px; background: #3a3a3a; border: 1px solid #303030; color: #f0f0f0; }
.range { appearance: none; height: 20px; background: var(--ramp) 6px 3px / 110px 4px no-repeat, linear-gradient(#999, #999) 5px 2px / 112px 6px no-repeat; }
.red { --ramp: linear-gradient(90deg, #02f802, #f8f802); }
.green { --ramp: linear-gradient(90deg, #0e0002, #0eff02); }
.blue { --ramp: linear-gradient(90deg, #0ef800, #0ef8ff); }
.range::-webkit-slider-thumb { appearance: none; width: 11px; height: 9px; margin-top: 11px; background: linear-gradient(#d8d8d8, #888); clip-path: polygon(50% 0, 100% 55%, 100% 100%, 0 100%, 0 55%); }
.spectrum { display: flex; height: 17px; margin: 1px 18px 5px 4px; border: 1px solid #222; }
.ramp { flex: 1; background: linear-gradient(#fff, transparent 50%, #000), linear-gradient(90deg, #e11 0, #fe0 17%, #0a4 32%, #0af 50%, #319 66%, #e08 82%, #e11); }
.bw { width: 8px; background: linear-gradient(#fff 50%, #000 50%); }

.adjust { height: 112px; padding: 4px 40px 0 9px; }
.adjust p { margin: 0 0 8px; height: 18px; line-height: 18px; color: #aaa; }
.irow { display: flex; justify-content: center; }
.irow button { width: 24px; height: 27px; display: grid; place-items: start center; }
.gradmap { width: 16px; height: 13px; border: 1px solid #ccc; background: linear-gradient(90deg, #444, #bbb); }

.layers { flex: 1; min-height: 0; display: flex; flex-direction: column; border-bottom: 0; }
.layers .ptabs { flex: none; }
.lrow { flex: none; height: 28px; display: flex; align-items: center; padding: 0 6px 0 5px; color: #aaa; border-bottom: 1px solid #3a3a3a; box-shadow: 0 1px #636363; }
.lrow label { margin-left: auto; white-space: nowrap; }
.filter { height: 26px; }
.lockrow { height: 30px; padding-bottom: 2px; }
.kind { width: 70px; gap: 4px; background: #5a5a5a; border-color: #444; box-shadow: none; }
.kind select, .kind svg { color: #aaa; }
.filters { display: flex; gap: 12px; margin-left: 21px; }
.filters svg, .locks svg { color: #999; }
.toggle { margin-left: auto; width: 9px; height: 18px; background: linear-gradient(#777 45%, #3b3b3b 45%); border: 1px solid #444; }
.blend { width: 110px; }
.dimtext { background: #474747; }
.dimtext input { color: #777; }
.lrow .combo input { padding: 0 2px; }
.locks { display: flex; align-items: center; gap: 9px; margin-left: 3px; }
.layerlist { flex: 1; min-height: 0; display: flex; background: #454545; }
.layerlist ul { flex: 1; margin: 0; padding: 0; list-style: none; }
.layerlist li { height: 26px; display: flex; align-items: center; background: #535353; border-bottom: 1px solid #333; }
.layerlist .sel { background: #6d7d93; }
.vis { width: 31px; align-self: stretch; display: grid; place-items: center; background: #535353; border-right: 1px solid #333; }
.thumb { width: 36px; height: 23px; margin: 0 8px 0 1px; display: grid; place-items: center; }
.thumb > * { grid-area: 1 / 1; }
.framed i { width: 36px; height: 23px; border: 1px solid #fff; clip-path: polygon(0 0, 12px 0, 12px 23px, 0 23px, 0 0, 24px 0, 36px 0, 36px 23px, 24px 23px, 24px 0); }
.white { width: 32px; height: 19px; background: #fff; border: 1px solid #111; }
.name { color: #f6f6f6; }
.locked { margin: 0 17px 0 auto; }
.lscroll { width: 15px; background: linear-gradient(90deg, #383838, #454545); }
.lfoot { flex: none; height: 16px; display: flex; align-items: flex-start; justify-content: flex-end; gap: 15px; padding: 4px 30px 0 0; overflow: hidden; border-top: 1px solid #777; }
.lfoot svg, .fx { color: #a8a8a8; }
.fx { font: italic 14px/10px "Liberation Serif", serif; }

/* layers above the window */
.ime { position: absolute; right: 260px; bottom: 1px; height: 25px; width: 60px; display: flex; align-items: center; justify-content: center; gap: 4px; background: #fff; color: #333; font-size: 13px; border-radius: 4px; box-shadow: 0 0 3px #000; }
.watermark { position: absolute; right: 6px; bottom: 6px; display: flex; align-items: center; }
.watermark div { display: flex; flex-direction: column; }
.watermark b { font: bold 21px/22px "Noto Sans CJK SC", sans-serif; color: #2460a0; }
.watermark span { font: 17px/22px "Noto Sans", sans-serif; color: #1f7d42; }
.pointers { position: absolute; inset: 0; width: 100%; height: 100%; pointer-events: none; filter: drop-shadow(2px 3px 2px rgba(0, 0, 0, .6)); }
.pointers path { stroke: #fe0000; stroke-width: 3; stroke-linecap: round; }
.pointers use { stroke: none; }
```
